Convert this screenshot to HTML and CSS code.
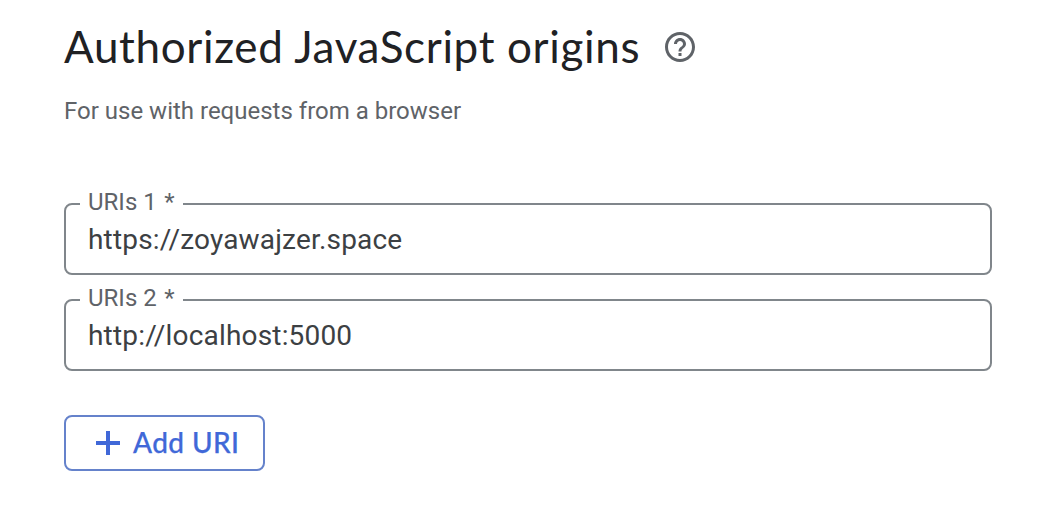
FILE: index.html
```html
<!DOCTYPE html>
<html lang="en">
<head>
<meta charset="utf-8">
<title>Authorized JavaScript origins</title>
<link rel="stylesheet" href="styles.css">
</head>
<body>
<main class="origins">
  <header class="heading">
    <h1 class="title">Authorized JavaScript origins</h1>
    <svg class="help" viewBox="0 0 24 24" aria-label="Help"><path d="M11 18h2v-2h-2v2zm1-16C6.48 2 2 6.48 2 12s4.480 10 10 10 10-4.480 10-10S17.520 2 12 2zm0 18c-4.410 0-8-3.590-8-8s3.590-8 8-8 8 3.590 8 8-3.590 8-8 8zm0-14c-2.210 0-4 1.790-4 4h2c0-1.100.9-2 2-2s2 .9 2 2c0 2-3 1.750-3 5h2c0-2.250 3-2.500 3-5 0-2.210-1.790-4-4-4z"/></svg>
  </header>
  <p class="hint">For use with requests from a browser</p>
  <form class="fields">
    <fieldset class="field"><legend class="label">URIs 1 <span class="required">*</span></legend><div class="value">https://zoyawajzer.space</div></fieldset>
    <fieldset class="field"><legend class="label">URIs 2 <span class="required">*</span></legend><div class="value">http://localhost:5000</div></fieldset>
  </form>
  <button class="add" type="button">
    <svg class="plus" viewBox="0 0 24 24"><path d="M12 0v24M0 12h24"/></svg>
    <span class="add-text">Add URI</span>
  </button>
</main>
</body>
</html>
```
FILE: styles.css
```css
* { box-sizing: border-box; }
body { margin: 0; background: #fff; font-family: Roboto, sans-serif; }
.origins { height: 524px; padding: 19px 66px 0 64px; }
.heading { display: flex; align-items: center; gap: 22px; height: 56px; }
.title { margin: 0; width: 576px; padding-bottom: 2px; font: 400 44px/54px Lato, sans-serif; letter-spacing: 0.66px; color: #202124; white-space: nowrap; }
.help { width: 36px; height: 36px; fill: #5f6368; }
.hint { margin: 20px 0 0; font-size: 24px; line-height: 32px; color: #5f6368; }
.fields { margin-top: 61px; display: flex; flex-direction: column; gap: 9px; }
.field { margin: 0; padding: 0 22px 0 14px; height: 87px; min-width: 0; border: 2px solid #80868b; border-radius: 8px; }
.label { padding: 0 8px 4px; font-size: 24px; line-height: 28px; color: #5f6368; }
.required { margin-left: 1.5px; }
.value { padding-left: 8px; font-size: 28px; line-height: 40px; letter-spacing: 0.18px; color: #3c4043; }
.add { margin-top: 44px; width: 201px; height: 56px; padding: 0 0 0 30px; display: flex; align-items: center; gap: 13px; border: 2px solid #6582cb; border-radius: 8px; background: #fff; color: #4068d8; }
.plus { width: 24px; height: 24px; stroke: currentColor; stroke-width: 4; }
.add-text { padding-bottom: 2px; font: 500 28px/38px Lato, sans-serif; letter-spacing: 0.4px; -webkit-text-stroke: 0.25px currentColor; }
```
